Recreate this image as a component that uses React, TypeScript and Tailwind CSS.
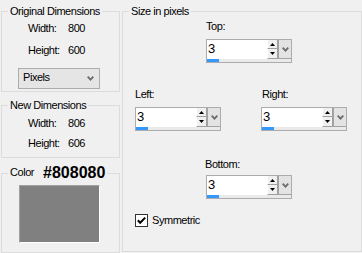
import React from "react";

function Chevron() {
  return (
    <svg width="7" height="5" viewBox="0 0 7 5" className="block">
      <polyline points="0.7,0.7 3.5,3.6 6.3,0.7" fill="none" stroke="#6b6b6b" strokeWidth="1.8" />
    </svg>
  );
}

function UpTri() {
  return (
    <svg width="5" height="3" viewBox="0 0 5 3" className="block">
      <path d="M2.5 0 L5 3 L0 3 Z" fill="#000" />
    </svg>
  );
}

function DownTri() {
  return (
    <svg width="5" height="3" viewBox="0 0 5 3" className="block">
      <path d="M0 0 L5 0 L2.5 3 Z" fill="#000" />
    </svg>
  );
}

function Spin({ className = "" }: { className?: string }) {
  return (
    <div className={`w-[86px] h-[24px] border border-[#acacac] flex flex-col ${className}`}>
      <div className="flex h-[19px]">
        <div className="w-[60px] h-full bg-white text-[13px] leading-[17px] pl-[1px] tracking-normal">3</div>
        <div className="w-[11px] h-full flex flex-col bg-[#f0f0f0]">
          <div className="h-[9px] border-r border-b border-[#a0a0a0] border-l border-l-white flex items-center justify-center">
            <UpTri />
          </div>
          <div className="h-[10px] border-r border-b border-[#a0a0a0] border-l border-l-white flex items-center justify-center">
            <DownTri />
          </div>
        </div>
        <div className="w-[13px] h-full bg-[#e3e3e3] border-l border-b border-[#a3a3a3] flex items-center justify-center">
          <Chevron />
        </div>
      </div>
      <div className="h-[3px] bg-[#eaeaea] flex">
        <div className="w-[12px] h-full bg-[#3399ff]" />
      </div>
    </div>
  );
}

function Row({ label, value, className = "" }: { label: string; value: string; className?: string }) {
  return (
    <div className={`flex pl-[26px] leading-[13px] ${className}`}>
      <span className="w-[40px]">{label}</span>
      <span>{value}</span>
    </div>
  );
}

export default function App() {
  return (
    <div className="w-[362px] h-[253px] bg-[#f0f0f0] flex overflow-hidden text-[11px] tracking-[-0.45px] text-black font-['Liberation_Sans',Arial,sans-serif]">
      <div className="ml-[1px] w-[119px] flex flex-col shrink-0">
        <fieldset className="mt-[5px] h-[88px] border border-[#dcdcdc] min-w-0">
          <legend className="ml-[6px] px-[2px] leading-[13px]">Original Dimensions</legend>
          <Row label="Width:" value="800" className="mt-[4px]" />
          <Row label="Height:" value="600" className="mt-[9px]" />
          <div className="mt-[11px] ml-[16px] w-[82px] h-[21px] border border-[#acacac] bg-[#e5e5e5] flex items-center justify-between pl-[4px] pr-[5px] leading-[13px]">
            <span className="-mt-[2px]">Pixels</span>
            <Chevron />
          </div>
        </fieldset>

        <fieldset className="mt-[7px] h-[60px] border border-[#dcdcdc] min-w-0">
          <legend className="ml-[6px] px-[2px] leading-[13px]">New Dimensions</legend>
          <Row label="Width:" value="806" className="mt-[5px]" />
          <Row label="Height:" value="606" className="mt-[7px]" />
        </fieldset>

        <fieldset className="mt-[7px] h-[90px] border border-[#dcdcdc] min-w-0">
          <legend className="ml-[6px] px-[2px] pb-[3px] h-[18px] flex items-center">
            <span className="leading-[13px]">Color</span>
            <span className="ml-[9px] text-[16px] leading-[15px] font-bold tracking-normal">#808080</span>
          </legend>
          <div className="mt-[2px] ml-[17px] w-[81px] h-[58px] bg-[#808080] border-t border-l border-[#a0a0a0] border-b-white border-r-white border-b border-r" />
        </fieldset>
      </div>

      <fieldset className="ml-[2px] mt-[5px] w-[240px] h-[247px] border border-[#dcdcdc] min-w-0 shrink-0">
        <legend className="ml-[6px] px-[2px] leading-[13px]">Size in pixels</legend>
        <div className="mt-[2px] ml-[83px] leading-[13px]">Top:</div>
        <Spin className="mt-[6px] ml-[83px]" />
        <div className="mt-[25px] flex ml-[12px]">
          <div>
            <div className="leading-[13px]">Left:</div>
            <Spin className="mt-[6px]" />
          </div>
          <div className="ml-[40px]">
            <div className="leading-[13px] ml-[1px]">Right:</div>
            <Spin className="mt-[6px]" />
          </div>
        </div>
        <div className="mt-[27px] ml-[82px] leading-[13px]">Bottom:</div>
        <Spin className="mt-[4px] ml-[83px]" />
        <div className="mt-[15px] ml-[12px] flex items-center">
          <div className="w-[13px] h-[13px] border border-[#333333] bg-white flex items-center justify-center">
            <svg width="11" height="11" viewBox="0 0 11 11" className="block">
              <polyline points="1.8,5.2 4.2,7.8 9.2,2.6" fill="none" stroke="#000" strokeWidth="2" />
            </svg>
          </div>
          <span className="ml-[4px] leading-[13px]">Symmetric</span>
        </div>
      </fieldset>
    </div>
  );
}
